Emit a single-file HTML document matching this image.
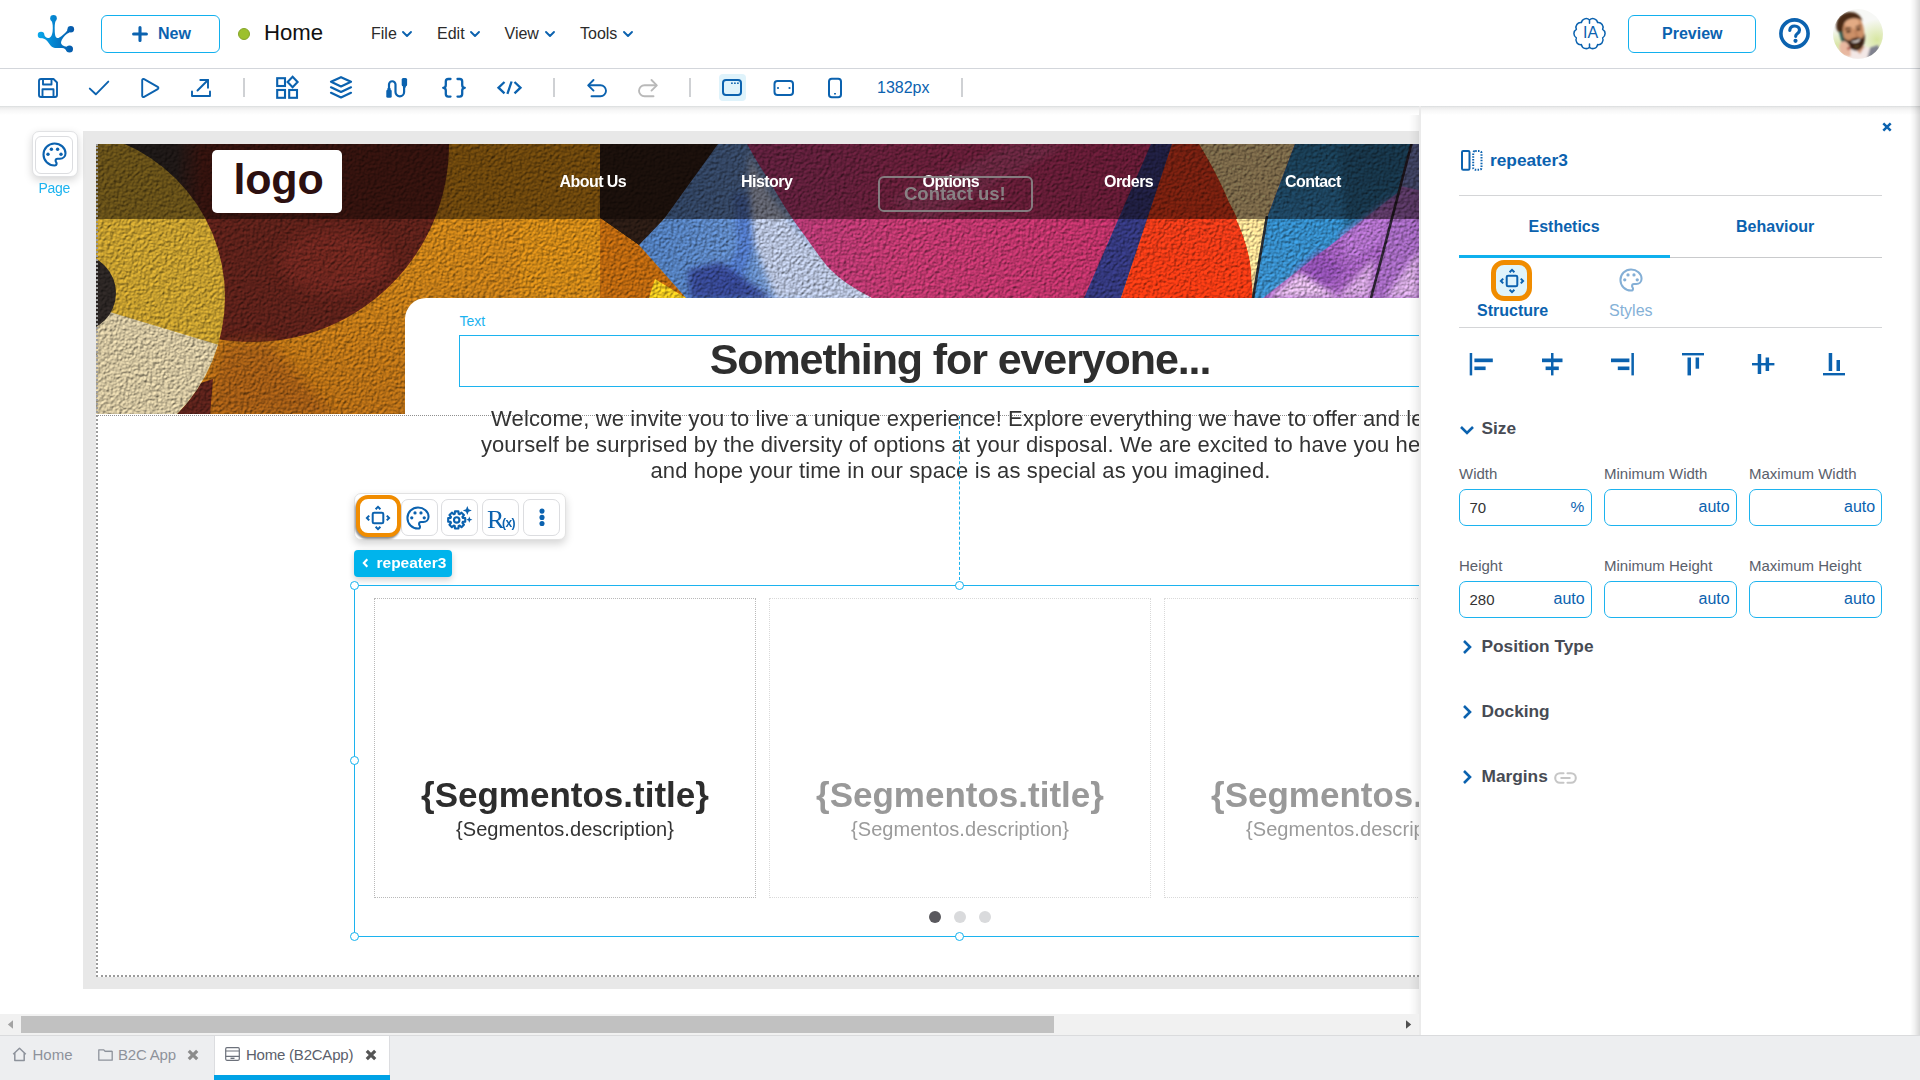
<!DOCTYPE html>
<html lang="en">
<head>
<meta charset="utf-8">
<title>Home - Page modeler</title>
<style>
*{box-sizing:border-box;margin:0;padding:0}
html,body{width:1920px;height:1080px;overflow:hidden;background:#fff}
body{font-family:"Liberation Sans",sans-serif;color:#333;position:relative}
.abs{position:absolute}
svg{position:absolute;overflow:visible}
.ic{fill:none;stroke:#0b62af;stroke-width:1.9;stroke-linecap:round;stroke-linejoin:round}
.icf{fill:#0b62af;stroke:none}
.t{position:absolute;white-space:nowrap;line-height:1}
/* ---------- top bar ---------- */
#topbar{left:0;top:0;width:1920px;height:69px;background:#fff;border-bottom:1px solid #d3d6db}
.btn{position:absolute;border:1px solid #12b0ee;border-radius:6px;background:#fff;color:#0b62af;font-weight:700;font-size:16px}
.menu{font-size:16px;color:#2b2b2b;top:26px}
/* ---------- toolbar ---------- */
#toolbar{left:0;top:69px;width:1920px;height:37px;background:#fff}
#tbshadow{left:0;top:106px;width:1920px;height:9px;background:linear-gradient(#d9dcdd 0,#ececec 18%,#f7f7f7 50%,#fff 100%)}
.sep{position:absolute;top:78px;width:2px;height:19px;background:#cfd1d4}
/* ---------- canvas ---------- */
#canvasbg{left:83px;top:131px;width:1336px;height:858px;background:#e8e8e8}
#page{left:96px;top:144px;width:1323px;height:833px;background:#fff}

.nav{top:173.500px;font-size:16px;font-weight:700;color:#fff;letter-spacing:-.55px}
.ctr{left:405px;width:1110px;text-align:center}
.fbtn{position:absolute;top:498.500px;width:37px;height:37.500px;border:1px solid #dcdde0;border-radius:7px;background:#fff}
.card{position:absolute;top:598px;width:382px;height:300px;border:1px dotted #d9d9d9}
.ctitle{top:776.500px;width:382px;text-align:center;font-size:35px;font-weight:700}
.cdesc{top:819px;width:382px;text-align:center;font-size:20px;letter-spacing:.05px}
.dot{position:absolute;top:911px;width:12px;height:12px;border-radius:50%;background:#d9dadc}
.hd{position:absolute;width:9.500px;height:9.500px;border-radius:50%;background:#fff;border:1.500px solid #12b1ee;margin:-.25px 0 0 -.25px}
/* ---------- panel ---------- */
#panel{left:1419px;top:106px;width:501px;height:930px;background:#fff;border-left:2px solid #ebebeb}
.plabel{font-size:15px;color:#5a606b}
.inp{position:absolute;width:132.500px;height:37px;border:1px solid #1cb3ef;border-radius:7px;background:#fff}
.sec{font-size:17.300px;font-weight:700;color:#474b54}
.unit{font-size:16px;color:#0b62af}
/* ---------- bottom ---------- */
#hscroll{left:0;top:1014px;width:1419px;height:21px;background:#f1f1f1}
#bottombar{left:0;top:1035px;width:1920px;height:45px;background:#edeef0;border-top:1px solid #dadbdd}
</style>
</head>
<body>


<svg width="0" height="0" style="left:-10px;top:-10px"><defs>
 <g id="palette"><path fill="none" stroke="#0b62af" stroke-width="2.100" stroke-linejoin="round" d="M12.500 1.500C6.400 1.500 1.500 6.400 1.500 12.500s4.900 11 11 11c1.300 0 2.100-.9 2.100-2 0-.6-.2-1-.5-1.400-.3-.4-.5-.8-.5-1.400 0-1.100.9-2 2-2h2.400c3.100 0 5.500-2.400 5.500-5.500 0-5.300-4.900-9.700-11-9.700z"/>
 <g fill="#0b62af"><circle cx="6" cy="12.300" r="1.700"/><circle cx="9.400" cy="7.200" r="1.700"/><circle cx="15.600" cy="7.200" r="1.700"/><circle cx="19" cy="12.300" r="1.700"/></g></g>
 <g id="move"><rect x="6.700" y="6.700" width="10.600" height="10.600" rx="1.400" fill="none" stroke="#0b62af" stroke-width="2"/>
 <g fill="none" stroke="#0b62af" stroke-width="2"><path d="M9.600 3.200L12 .900l2.400 2.300"/><path d="M9.600 20.800l2.400 2.300 2.400-2.300"/><path d="M3.200 9.600L.900 12l2.300 2.400"/><path d="M20.800 9.600l2.300 2.400-2.300 2.400"/></g></g>
</defs></svg>
<!-- ================= TOP BAR ================= -->
<div id="topbar" class="abs"></div>

<!-- app logo -->
<svg style="left:30px;top:8px" width="60" height="54" viewBox="0 0 1200 1080">
  <defs><linearGradient id="lg" x1="150" y1="0" x2="880" y2="0" gradientUnits="userSpaceOnUse">
    <stop offset="0" stop-color="#0aa9ec"/><stop offset=".45" stop-color="#0584cf"/><stop offset="1" stop-color="#0657a8"/></linearGradient></defs>
  <g fill="url(#lg)">
    <circle cx="470" cy="207" r="66"/><circle cx="221" cy="540" r="66"/><circle cx="816" cy="426" r="66"/><circle cx="790" cy="822" r="70"/>
    <path d="M430 255 C455 300 462 380 452 470 C440 560 405 610 355 600 C310 590 290 560 275 520 L235 600 C300 610 340 650 385 715 C420 765 450 795 500 798 L640 800 C690 805 715 830 735 860 L800 760 C740 785 690 775 650 745 C610 715 615 680 640 630 C670 570 720 520 790 488 L760 415 C740 470 700 505 650 545 C600 585 565 610 540 600 C505 585 495 520 495 440 C492 370 495 300 512 258 Z"/>
  </g>
</svg>

<!-- New button -->
<div class="btn" style="left:101px;top:15px;width:119px;height:38px"></div>
<svg style="left:132px;top:26px" width="16" height="16" viewBox="0 0 16 16"><path d="M8 1.6v12.8M1.6 8h12.8" stroke="#0b62af" stroke-width="3.1" stroke-linecap="round" fill="none"/></svg>
<div class="t" style="left:158px;top:26px;font-size:16px;font-weight:700;color:#0b62af">New</div>

<!-- status dot + title -->
<div class="abs" style="left:238px;top:28px;width:12px;height:12px;border-radius:50%;background:#9cc02d;border:1px solid #86a52a"></div>
<div class="t" style="left:264px;top:22px;font-size:22.200px;color:#111">Home</div>

<!-- menus -->
<div class="t menu" style="left:371px">File</div>
<div class="t menu" style="left:437px">Edit</div>
<div class="t menu" style="left:504.5px">View</div>
<div class="t menu" style="left:580px">Tools</div>
<svg style="left:0;top:0" width="700" height="68">
  <g class="ic" stroke-width="2">
    <path d="M403 32l4 4 4-4"/><path d="M471 32l4 4 4-4"/><path d="M546 32l4 4 4-4"/><path d="M624 32l4 4 4-4"/>
  </g>
</svg>

<!-- right side of top bar -->
<svg style="left:1573px;top:17px" width="33" height="33" viewBox="0 0 33 33">
  <path class="ic" style="stroke-width:1.5" d="M16.50 3.01 A4.8 4.8 0 0 1 24.61 5.60 A4.8 4.8 0 0 1 29.62 12.40 A4.8 4.8 0 0 1 29.62 20.80 A4.8 4.8 0 0 1 24.61 27.60 A4.8 4.8 0 0 1 16.50 30.19 A4.8 4.8 0 0 1 8.39 27.60 A4.8 4.8 0 0 1 3.38 20.80 A4.8 4.8 0 0 1 3.38 12.40 A4.8 4.8 0 0 1 8.39 5.60 A4.8 4.8 0 0 1 16.50 3.01Z M16.50 3.01 v3.2 M16.50 30.19 v-3.2"/>
</svg>
<div class="t" style="left:1583px;top:25px;font-size:16px;color:#0b62af">IA</div>

<div class="btn" style="left:1628px;top:15px;width:128px;height:38px"></div>
<div class="t" style="left:1662px;top:26px;font-size:16px;font-weight:700;color:#0b62af">Preview</div>

<svg style="left:1779px;top:18px" width="31" height="31" viewBox="0 0 31 31">
  <circle cx="15.500" cy="15.500" r="13.600" fill="none" stroke="#0b62af" stroke-width="3.600"/>
  <path d="M10.800 12.300c.2-2.700 2.200-4.300 4.900-4.300 2.800 0 4.800 1.700 4.800 4.100 0 1.800-1 2.800-2.300 3.700-1.100.8-1.500 1.300-1.500 2.500" fill="none" stroke="#0b62af" stroke-width="3.200" stroke-linecap="round"/>
  <circle cx="16.500" cy="22.800" r="2.100" fill="#0b62af"/>
</svg>

<!-- avatar -->
<svg style="left:1833px;top:9px" width="50" height="50" viewBox="0 0 50 50">
  <defs><clipPath id="avc"><circle cx="25" cy="25" r="25"/></clipPath>
  <filter id="avb" x="-10%" y="-10%" width="120%" height="120%"><feGaussianBlur stdDeviation=".85"/></filter>
  <radialGradient id="avg1" cx=".88" cy=".62" r=".42"><stop offset="0" stop-color="#d7e6a0"/><stop offset="1" stop-color="#d7e6a0" stop-opacity="0"/></radialGradient>
  <radialGradient id="avg2" cx=".08" cy=".72" r=".32"><stop offset="0" stop-color="#d9e6a6"/><stop offset="1" stop-color="#d9e6a6" stop-opacity="0"/></radialGradient></defs>
  <g clip-path="url(#avc)">
    <rect width="50" height="50" fill="#f7f8f6"/>
    <rect width="50" height="50" fill="url(#avg1)"/><rect width="50" height="50" fill="url(#avg2)"/>
    <g filter="url(#avb)">
      <path d="M36 39 L45 36 L50 50 H31Z" fill="#80828f"/>
      <path d="M17 41 L29 37 L37 39 L34 50 H18Z" fill="#f3e8e6"/>
      <path d="M20 38 l7 7 5-8z" fill="#d39b7c"/>
      <!-- face (tilted) -->
      <g transform="rotate(-9 20 24)">
        <path d="M9 15 C10 8 19 5 26 8 C31 11 32 20 31 27 C30 35 26 41 21 41 C15 41 10 34 9 26Z" fill="#cc9068"/>
        <path d="M12 13 C16 8.500 23 8 27 11 C28 15 27 18 25 20 C20 20 15 18 12 13Z" fill="#e3ab84"/>
        <path d="M21 22 c1 3 1.500 5 .5 7 l3 .3 c.8-2 .3-4.500-1-7.300z" fill="#b87b55" opacity=".7"/>
        <ellipse cx="15.800" cy="21.800" rx="2.600" ry="1.300" fill="#4b2e1e"/><ellipse cx="26" cy="21.200" rx="2.400" ry="1.200" fill="#4b2e1e"/>
        <path d="M12.500 19.500 c2-1.400 4.500-1.600 6.500-.7M23.500 18.800 c1.800-1.200 4-1.200 5.500-.2" stroke="#4a2c18" stroke-width="1.300" fill="none"/>
        <!-- beard -->
        <path d="M9.500 26 C10.500 35 15.500 42 21 42 C27 42 31 35.500 31.500 26 C30 29 28.500 30.500 27 30.500 C25 28.500 18 28.500 15.500 31 C13 30.500 11 29 9.500 26Z" fill="#3b2416"/>
        <path d="M16.500 31.500 c3 1.200 7 .8 9.800-1.200 c-.8 3.800-7.200 5-9.800 1.200z" fill="#f5ede8"/>
        <path d="M19 36.500 c1.500.8 3.500.8 5 0 l-.5 2 c-1.300.5-2.700.5-4 0z" fill="#6a5a2c" opacity=".7"/>
      </g>
      <!-- hair -->
      <path d="M3.500 20 C2 10 8 3.500 16 3 C23 2.500 27.500 6 29.500 12 C25 8.500 19.500 8.500 14.500 11 C10.500 13.500 9.500 18.500 10 24 C7 24 4.500 23 3.500 20Z" fill="#4a2c18"/>
      <!-- phone + hand -->
      <path d="M6 23 l3.500-1 2.200 10.500-3 1z" fill="#2f5a50"/>
      <path d="M6.500 36 C8 32 12 31 14.500 34 C17 37 18.500 42 17.500 48 L8 46 C6.500 43 6 39 6.500 36Z" fill="#e8b8a0"/>
      <circle cx="15.500" cy="39.500" r="1.500" fill="#a8483f"/>
    </g>
  </g>
</svg>

<!-- ================= TOOLBAR ================= -->
<div id="toolbar" class="abs"></div>
<div id="tbshadow" class="abs"></div>
<div class="sep" style="left:243px"></div>
<div class="sep" style="left:553px"></div>
<div class="sep" style="left:689px"></div>
<div class="sep" style="left:961px"></div>
<div class="abs" style="left:719px;top:74px;width:27px;height:27px;border-radius:4px;background:#dff3fb"></div>
<div class="t" style="left:877px;top:80px;font-size:16px;color:#0b62af">1382px</div>

<svg id="tbicons" style="left:0;top:0" width="1000" height="110">
 <g class="ic">
  <!-- save -->
  <path d="M39 81a2 2 0 0 1 2-2h12.500l3.500 3.500V95a2 2 0 0 1-2 2H41a2 2 0 0 1-2-2z"/>
  <path d="M43 79.200v5.300h8.500v-5.300"/><path d="M42.500 97v-7.800h11V97"/>
  <!-- check -->
  <path d="M89.800 88.600l6 5.700 12.500-12.700"/>
  <!-- play -->
  <path d="M142.200 80.300c0-1 1-1.600 1.900-1.100l13.600 7.700c.9.500.9 1.700 0 2.200l-13.600 7.700c-.9.500-1.900-.1-1.900-1.100z"/>
  <!-- export -->
  <path d="M192 91.500V96h18v-4.500"/><path d="M197.500 90.500L208 80"/><path d="M200.300 80h7.700v7.700"/>
  <!-- widgets -->
  <g stroke-linejoin="miter" stroke-linecap="butt" stroke-width="2.100">
   <rect x="277.200" y="78.200" width="7.800" height="7.800"/><rect x="277.200" y="90" width="7.800" height="7.800"/><rect x="289.200" y="90" width="7.800" height="7.800"/>
   <path d="M292.600 76.800l5 5.200-5 5.200-5-5.200z"/>
  </g>
  <!-- layers -->
  <g stroke-width="2.200">
   <path d="M341 77.200l10 4.600-10 4.600-10-4.600z"/><path d="M331 87.300l10 4.700 10-4.700"/><path d="M331 92.800l10 4.700 10-4.700"/>
  </g>
  <!-- flow -->
  <path stroke-width="2.200" d="M389 90V84.500a3.200 3.200 0 0 1 6.500 0V92a4.300 4.300 0 0 0 8.600 0V86"/>
  <!-- braces -->
  <g stroke-width="2.300">
   <path d="M450.500 79h-2.200a2.500 2.500 0 0 0-2.500 2.500v3.600c0 1.600-1 2.700-2.600 2.700 1.600 0 2.600 1.100 2.600 2.700v3.600a2.500 2.500 0 0 0 2.500 2.500h2.200"/>
   <path d="M457.500 79h2.200a2.500 2.500 0 0 1 2.500 2.500v3.600c0 1.600 1 2.700 2.600 2.700-1.600 0-2.600 1.100-2.600 2.700v3.600a2.500 2.500 0 0 1-2.500 2.500h-2.200"/>
  </g>
  <!-- code -->
  <g stroke-width="2.300" stroke-linecap="butt" stroke-linejoin="miter">
   <path d="M504.500 82l-6 5.700 6 5.700"/><path d="M514.500 82l6 5.700-6 5.700"/><path d="M511.600 81.500l-4.200 12.300"/>
  </g>
  <!-- undo -->
  <path d="M593.500 80l-5.300 5.300 5.300 5.300"/><path d="M588.800 85.300h11.700a5.500 5.500 0 0 1 0 11h-9"/>
  <!-- device icons -->
  <g stroke-width="2">
   <rect x="723" y="80" width="18" height="15" rx="3"/>
   <rect x="774.500" y="81" width="18.500" height="14" rx="3"/>
   <rect x="829" y="78.800" width="12" height="18.400" rx="2.800"/>
  </g>
 </g>
 <!-- redo (disabled) -->
 <g class="ic" style="stroke:#b9b9b9"><path d="M651.500 80l5.300 5.300-5.300 5.300"/><path d="M656.200 85.300h-11.700a5.500 5.500 0 0 0 0 11h9"/></g>
 <!-- filled bits -->
 <g class="icf">
  <rect x="386.300" y="89.500" width="5.400" height="8.300" rx="1.500"/><rect x="387.500" y="88" width="3" height="3"/>
  <rect x="401.700" y="78" width="5.400" height="8.300" rx="1.500"/><rect x="402.900" y="85" width="3" height="2.500"/>
  <rect x="731" y="82.500" width="1.800" height="1.400"/><rect x="734" y="82.500" width="1.800" height="1.400"/><rect x="737" y="82.500" width="1.800" height="1.400"/>
  <circle cx="778" cy="88" r="1.100"/><circle cx="789.500" cy="88" r="1.100"/>
  <rect x="834" y="93" width="2" height="1.500" rx=".5"/>
 </g>
</svg>

<!-- ================= CANVAS ================= -->
<div id="canvasbg" class="abs"></div>
<div id="page" class="abs"></div>

<!-- hero mural -->
<svg style="left:96px;top:144px" width="1323" height="270" viewBox="96 144 1323 270">
 <defs>
  <clipPath id="hc"><rect x="96" y="144" width="1323" height="270"/></clipPath>
  <clipPath id="ycirc"><circle cx="58" cy="297" r="167"/></clipPath>
  <filter id="stucco" x="0" y="0" width="100%" height="100%" color-interpolation-filters="sRGB">
    <feTurbulence type="fractalNoise" baseFrequency="0.33" numOctaves="3" seed="4" result="n"/>
    <feDiffuseLighting in="n" surfaceScale="1.15" diffuseConstant="1" lighting-color="#fff" result="lt"><feDistantLight azimuth="235" elevation="52"/></feDiffuseLighting>
    <feComposite in="SourceGraphic" in2="lt" operator="arithmetic" k1="1.27" k2="0" k3="0" k4="0"/>
  </filter>
  <filter id="soft" x="-30%" y="-30%" width="160%" height="160%"><feGaussianBlur stdDeviation="7"/></filter>
  <filter id="soft3" x="-30%" y="-30%" width="160%" height="160%"><feGaussianBlur stdDeviation="3"/></filter>
  <linearGradient id="charG" x1="150" y1="0" x2="203" y2="0" gradientUnits="userSpaceOnUse"><stop offset="0" stop-color="#2f2c2b"/><stop offset=".5" stop-color="#322a29"/><stop offset="1" stop-color="#5b2019"/></linearGradient>
  <linearGradient id="orG" x1="0" y1="144" x2="0" y2="414" gradientUnits="userSpaceOnUse"><stop offset="0" stop-color="#cb8618"/><stop offset=".45" stop-color="#c47e18"/><stop offset="1" stop-color="#b06a15"/></linearGradient>
  <linearGradient id="redG" x1="0" y1="144" x2="0" y2="300" gradientUnits="userSpaceOnUse"><stop offset="0" stop-color="#d6391f"/><stop offset="1" stop-color="#f23a12"/></linearGradient>
  <linearGradient id="magG" x1="760" y1="0" x2="1120" y2="0" gradientUnits="userSpaceOnUse"><stop offset="0" stop-color="#ae3a74"/><stop offset=".4" stop-color="#bb376c"/><stop offset="1" stop-color="#ba3166"/></linearGradient>
  <linearGradient id="tealG" x1="0" y1="144" x2="0" y2="298" gradientUnits="userSpaceOnUse"><stop offset="0" stop-color="#27729f"/><stop offset=".5" stop-color="#3388c2"/><stop offset="1" stop-color="#3a8cc6"/></linearGradient>
  <linearGradient id="bluG" x1="650" y1="0" x2="870" y2="0" gradientUnits="userSpaceOnUse"><stop offset="0" stop-color="#4f7bb8"/><stop offset=".45" stop-color="#6088c2"/><stop offset=".6" stop-color="#7f9dcd"/><stop offset="1" stop-color="#c6ccdb"/></linearGradient>
 </defs>
 <g clip-path="url(#hc)" filter="url(#stucco)">
  <!-- base orange -->
  <rect x="96" y="144" width="1323" height="270" fill="url(#orG)"/>
  <!-- maroon circle -->
  <circle cx="252" cy="145" r="197" fill="#5b2019"/>
  <ellipse cx="335" cy="262" rx="55" ry="32" fill="#8a2f25" opacity=".38" filter="url(#soft)"/>
  <!-- charcoal sliver top-left -->
  <path d="M100 144H200L206 212H140Z" fill="url(#charG)"/>
  
  <!-- shadowy band below maroon -->
  <path d="M221 344 L268 340 L335 416 L205 416Z" fill="#8e4c18" opacity=".55" filter="url(#soft)"/>
  <path d="M165 416 L198 384 L213 379 L210 416Z" fill="#59211a"/>
  <!-- yellow circle -->
  <circle cx="58" cy="297" r="167" fill="#c19b2e"/>
  <g clip-path="url(#ycirc)">
    <path d="M90 306 L226 347 L226 420 L90 420Z" fill="#cec09c"/>
    <circle cx="77" cy="293" r="39" fill="#2b2523"/>
  </g>
  <!-- middle: lighter orange strip, black wedge, dark orange -->
  <rect x="452" y="144" width="148" height="75" fill="#cd8817"/>
  <path d="M600 144H722L664 219 640 246 600 218Z" fill="#2a1b14"/>
  <path d="M600 218 L640 246 L686 298 H600Z" fill="#b8660f"/>
  <path d="M520 219H600V298H520Z" fill="#cf8a18" opacity=".55"/>
  <!-- blue fan -->
  <path d="M718 144H750 C775 190 800 240 872 298 H686 L639 245 664 219Z" fill="url(#bluG)"/>
  <path d="M749 150 C762 188 795 240 872 299 H776 L753 242 L749 200Z" fill="#b3bed7" filter="url(#soft3)"/>
  <path d="M733 192 L749 196 L753 246 L738 298 H712 L738 246Z" fill="#456ac2" opacity=".6" filter="url(#soft3)"/>
  <path d="M688 270 L720 262 L745 279 L772 299 H690Z" fill="#33408a" opacity=".9" filter="url(#soft3)"/>
  <path d="M649 298 L655 279 L686 298Z" fill="#e5c01f"/>
  <!-- magenta circle -->
  <path d="M747 144 C756 160 762 170 768 178.500 C773 187 778 196 783 204 C790 215 797 226 805 236 C812 246 819 256 827 266 C840 280 855 289 872 298 H1090 L1160 144Z" fill="url(#magG)"/>
  <path d="M890 200 L1010 144 H1070 L925 222Z" fill="#cf74a4" opacity=".3" filter="url(#soft3)"/>
  <!-- navy stripe -->
  <path d="M1151 144H1173L1121 298H1084Z" fill="#33377b"/>
  <!-- red leaf -->
  <path d="M1172 144H1199 C1212 165 1222 185 1229 202 C1236 215 1240 224 1242 232 C1248 250 1251 262 1251 273 L1253 298 H1121Z" fill="url(#redG)"/>
  <!-- cream -->
  <path d="M1199 144H1296L1267 218 1257 288 1253 298 1251 273 C1251 262 1248 250 1242 232 C1240 224 1236 215 1229 202 C1222 185 1212 165 1199 144Z" fill="#e6c88c"/>
  <path d="M1236 219H1267L1256 290 1251 268 C1249 250 1243 234 1236 219Z" fill="#f5db93"/>
  <!-- blue / purple -->
  <path d="M1295 144H1412L1371 298H1253L1267 218Z" fill="#9d5db7"/>
  <path d="M1295 144H1411L1402 189 1263 298H1253L1267 218Z" fill="url(#tealG)"/>
  <path d="M1340 144H1411L1402 189 1345 232Z" fill="#235f86" opacity=".8" filter="url(#soft3)"/>
  <path d="M1321 250l24 20-24 22-26-20z" fill="#8a4cab" opacity=".75" filter="url(#soft3)"/>
  <path d="M1268 298L1300 272 1340 298Z" fill="#d6b0dc" filter="url(#soft3)"/>
  <path d="M1336 298L1374 258 1371 298Z" fill="#d3a9da" opacity=".85" filter="url(#soft3)"/>
  <path d="M1340 236 L1395 196 L1385 240 L1350 262Z" fill="#b476cc" opacity=".7" filter="url(#soft3)"/>
  <path d="M1411 144H1419V298H1371Z" fill="#a067bb"/>
  <path d="M1411 144H1419V190L1400 186Z" fill="#6f7cba"/>
  <path d="M1385 298L1419 250V298Z" fill="#cda4d8" filter="url(#soft3)"/>
  <!-- thin dark lines -->
  <path d="M1411.500 144L1371 298" stroke="#2a2230" stroke-width="2.600"/>
  <path d="M1267 216L1253 298" stroke="#272a30" stroke-width="2.600"/>
 </g>
</svg>
<!-- nav overlay -->
<div class="abs" style="left:96px;top:144px;width:1323px;height:75px;background:rgba(10,4,2,.5)"></div>
<!-- page left dotted border over the hero -->
<div class="abs" style="left:96px;top:144px;width:0;height:833px;border-left:2px dotted #9c9c9c"></div>
<div class="abs" style="left:96px;top:975px;width:1323px;height:0;border-top:2px dotted #9c9c9c"></div>

<!-- logo box -->
<div class="abs" style="left:212px;top:150px;width:130px;height:63px;background:#fff;border-radius:5px"></div>
<div class="t" style="left:233.500px;top:158px;font-size:43px;font-weight:700;color:#2c1010;letter-spacing:-.2px">logo</div>

<!-- nav links -->
<div class="t nav" style="left:559.500px">About Us</div>
<div class="t nav" style="left:741px">History</div>
<div class="t nav" style="left:922.500px">Options</div>
<div class="t nav" style="left:1104px">Orders</div>
<div class="t nav" style="left:1285px">Contact</div>
<div class="abs" style="left:877.500px;top:175.500px;width:155.500px;height:36px;border:2px solid rgba(138,138,138,.88);border-radius:6px"></div>
<div class="t" style="left:904px;top:184.500px;font-size:18.500px;font-weight:700;color:rgba(140,140,140,.9)">Contact us!</div>

<!-- white card -->
<div class="abs" style="left:405px;top:298px;width:1014px;height:130px;background:#fff;border-top-left-radius:21px"></div>
<!-- hero bottom dotted line -->
<div class="abs" style="left:96px;top:415px;width:1323px;height:0;border-top:1px dotted #8f8f8f"></div>

<div class="t" style="left:459.500px;top:314px;font-size:14px;color:#1cb3ef">Text</div>
<div class="abs" style="left:459px;top:335px;width:962px;height:52px;border:1px solid #1cb3ef;border-right:none"></div>
<div class="t ctr" style="top:338px;font-size:43px;font-weight:700;color:#2e2e2e;letter-spacing:-1.1px">Something for everyone...</div>
<div class="abs" id="para" style="left:405.500px;top:405.500px;width:1110px;text-align:center;font-size:22px;line-height:26px;color:#333;letter-spacing:.12px;white-space:nowrap">Welcome, we invite you to live a unique experience! Explore everything we have to offer and let<br>yourself be surprised by the diversity of options at your disposal. We are excited to have you here<br>and hope your time in our space is as special as you imagined.</div>

<!-- distance guide -->
<div class="abs" style="left:959px;top:416px;width:0;height:169px;border-left:1px dashed #1cb3ef"></div>
<!-- Page button (left) -->
<div class="abs" style="left:31.500px;top:131px;width:46px;height:46px;background:#fff;border-radius:7px;border:1px solid #e1e2e4;box-shadow:0 3px 9px rgba(0,0,0,.17)"></div>
<div class="abs" style="left:35px;top:136px;width:38px;height:38px;background:#fff;border-radius:6px;border:1px solid #dcdde0"></div>
<svg style="left:42px;top:142px" width="25" height="25" viewBox="0 0 25 25"><use href="#palette"/></svg>
<div class="t" style="left:38.500px;top:181px;font-size:14px;color:#1cb3ef;letter-spacing:-.3px">Page</div>

<!-- floating toolbar -->
<div class="abs" style="left:354px;top:493px;width:212px;height:47px;background:#fff;border:1px solid #e2e2e2;border-radius:7px;box-shadow:0 4px 9px rgba(0,0,0,.17)"></div>
<div class="fbtn" style="left:400.500px"></div>
<div class="fbtn" style="left:441px"></div>
<div class="fbtn" style="left:482px"></div>
<div class="fbtn" style="left:523px"></div>
<div class="abs" style="left:355.500px;top:495px;width:45.500px;height:42px;border:4.500px solid #f08c00;border-radius:12px;background:#fff;box-shadow:-1px 2px 2px rgba(0,0,0,.45)"></div>
<svg style="left:365.500px;top:505.500px" width="24" height="24" viewBox="0 0 24 24"><use href="#move"/></svg>
<svg style="left:406px;top:505.500px" width="24" height="24" viewBox="0 0 25 25"><use href="#palette"/></svg>
<svg style="left:447px;top:505.500px" width="26" height="25" viewBox="0 0 26 25">
  <path d="M15.79 11.95 L18.23 12.17 L18.23 15.63 L15.79 15.85 L15.39 16.83 L16.95 18.71 L14.51 21.15 L12.63 19.59 L11.65 19.99 L11.43 22.43 L7.97 22.43 L7.75 19.99 L6.77 19.59 L4.89 21.15 L2.45 18.71 L4.01 16.83 L3.61 15.85 L1.17 15.63 L1.17 12.17 L3.61 11.95 L4.01 10.97 L2.45 9.09 L4.89 6.65 L6.77 8.21 L7.75 7.81 L7.97 5.37 L11.43 5.37 L11.65 7.81 L12.63 8.21 L14.51 6.65 L16.95 9.09 L15.39 10.97Z" fill="none" stroke="#0b62af" stroke-width="2.100" stroke-linejoin="round"/>
  <circle cx="9.7" cy="13.9" r="2.700" fill="none" stroke="#0b62af" stroke-width="2.100"/>
  <path fill="#0b62af" d="M20.300 0l1.300 3.200 3.200 1.300-3.200 1.300-1.300 3.200-1.300-3.200-3.200-1.300 3.200-1.300zM22.300 10.600l.9 2.200 2.200.9-2.200.9-.9 2.200-.9-2.200-2.200-.9 2.200-.9z"/>
</svg>
<div class="t" style="left:487px;top:506.500px;font-family:'Liberation Serif',serif;font-size:26px;color:#0b62af">R</div>
<div class="t" style="left:502px;top:517px;font-size:12px;font-weight:700;color:#0b62af;letter-spacing:-.6px">(x)</div>
<svg style="left:538.500px;top:508px" width="6" height="19" viewBox="0 0 6 19"><g fill="#0b62af"><circle cx="3" cy="3.100" r="2.550"/><circle cx="3" cy="9.400" r="2.550"/><circle cx="3" cy="15.500" r="2.550"/></g></svg>

<!-- repeater label -->
<div class="abs" style="left:354px;top:549.500px;width:98px;height:27px;background:#00b4ec;border-radius:4px;box-shadow:0 3px 6px rgba(0,0,0,.18)"></div>
<svg style="left:362px;top:558px" width="7" height="10" viewBox="0 0 7 10"><path d="M5.300 1.200L1.800 5l3.500 3.800" fill="none" stroke="#fff" stroke-width="2.100"/></svg>
<div class="t" style="left:376.500px;top:554.500px;font-size:15.500px;font-weight:700;color:#fff">repeater3</div>

<!-- selection box -->
<div class="abs" style="left:354px;top:585px;width:1212px;height:352px;border:1px solid #1cb3ef"></div>
<!-- cards -->
<div class="card" style="left:374px;border-color:#b9b9b9"></div>
<div class="card" style="left:769px"></div>
<div class="card" style="left:1164px"></div>
<div class="t ctitle" style="left:374px;color:#2d2d2d">{Segmentos.title}</div>
<div class="t cdesc" style="left:374px;color:#333">{Segmentos.description}</div>
<div class="t ctitle" style="left:769px;color:#999">{Segmentos.title}</div>
<div class="t cdesc" style="left:769px;color:#9b9b9b">{Segmentos.description}</div>
<div class="t ctitle" style="left:1164px;color:#999">{Segmentos.title}</div>
<div class="t cdesc" style="left:1164px;color:#9b9b9b">{Segmentos.description}</div>
<!-- pager dots -->
<div class="dot" style="left:929px;background:#5a595e"></div>
<div class="dot" style="left:954px"></div>
<div class="dot" style="left:979px"></div>
<!-- handles -->
<div class="hd" style="left:350px;top:581px"></div>
<div class="hd" style="left:955px;top:581px"></div>
<div class="hd" style="left:350px;top:756px"></div>
<div class="hd" style="left:350px;top:932px"></div>
<div class="hd" style="left:955px;top:932px"></div>


<!-- ================= RIGHT PANEL ================= -->
<div class="abs" style="left:1409px;top:115px;width:10px;height:899px;background:linear-gradient(90deg,rgba(0,0,0,0),rgba(0,0,0,.035) 60%,rgba(0,0,0,.075))"></div>
<div id="panel" class="abs"></div>
<div class="abs" style="left:1421px;top:106px;width:499px;height:9px;background:linear-gradient(#d9dcdd 0,#ececec 18%,#f7f7f7 50%,#fff 100%)"></div>
<!-- close x -->
<svg style="left:1882px;top:121.500px" width="10" height="10" viewBox="0 0 10 10"><path d="M1.300 1.300l7.400 7.400M8.700 1.300L1.300 8.700" stroke="#0b62af" stroke-width="2.500" fill="none"/></svg>
<!-- header -->
<svg style="left:1461px;top:150px" width="22" height="21" viewBox="0 0 22 21">
  <rect x="1" y="1" width="7.500" height="18.800" rx="1.200" fill="none" stroke="#0b62af" stroke-width="2"/>
  <rect x="12.200" y="1" width="8.300" height="18.800" rx="2" fill="none" stroke="#0b62af" stroke-width="2" stroke-dasharray="1.500 1.300"/>
</svg>
<div class="t" style="left:1490px;top:152px;font-size:17.300px;font-weight:700;color:#0b62af">repeater3</div>
<div class="abs" style="left:1459px;top:195px;width:423px;height:1px;background:#d4d5d7"></div>
<!-- tabs -->
<div class="t" style="left:1528.500px;top:219px;font-size:16px;font-weight:700;color:#0b62af">Esthetics</div>
<div class="t" style="left:1736px;top:219px;font-size:16px;font-weight:700;color:#0b62af">Behaviour</div>
<div class="abs" style="left:1459px;top:257px;width:423px;height:1px;background:#c9cacc"></div>
<div class="abs" style="left:1459px;top:255px;width:211px;height:3px;background:#0fb0ee"></div>
<!-- sub tabs -->
<div class="abs" style="left:1490.500px;top:259.500px;width:41px;height:41.500px;border:5px solid #f08c00;border-radius:13px;background:#dff4fb"></div>
<svg style="left:1499.500px;top:268.500px" width="24" height="24" viewBox="0 0 24 24"><use href="#move"/></svg>
<div class="t" style="left:1477px;top:302.500px;font-size:16px;font-weight:700;color:#0b62af">Structure</div>
<svg style="left:1619px;top:267.500px;opacity:.5" width="24" height="24" viewBox="0 0 25 25"><use href="#palette"/></svg>
<div class="t" style="left:1609px;top:302.500px;font-size:16px;color:#85b1d7">Styles</div>
<div class="abs" style="left:1459px;top:327px;width:423px;height:1px;background:#d4d5d7"></div>
<!-- align icons -->
<svg style="left:0;top:0" width="1920" height="400"><g fill="#0b62af">
  <rect x="1469.700" y="353" width="2.500" height="22.400"/><rect x="1474.400" y="358.500" width="18.400" height="3.700"/><rect x="1474.400" y="366.500" width="11.200" height="3.600"/>
  <rect x="1551" y="353" width="2.500" height="22.400"/><rect x="1542" y="358.500" width="20.500" height="3.700"/><rect x="1545.600" y="366.500" width="13.200" height="3.600"/>
  <rect x="1631.400" y="353" width="2.500" height="22.400"/><rect x="1611" y="358.500" width="18.400" height="3.700"/><rect x="1617.800" y="366.500" width="11.600" height="3.600"/>
  <rect x="1682" y="353" width="22" height="2.400"/><rect x="1687.500" y="357.500" width="3.500" height="17.900"/><rect x="1695.600" y="357.500" width="3.500" height="11.200"/>
  <rect x="1752" y="363" width="22.400" height="2.400"/><rect x="1757.700" y="354" width="3.500" height="20"/><rect x="1765.600" y="357.500" width="3.500" height="13.500"/>
  <rect x="1823" y="373" width="22" height="2.400"/><rect x="1828.700" y="353" width="3.500" height="18"/><rect x="1836.500" y="360" width="3.500" height="11"/>
</g></svg>
<!-- Size -->
<svg style="left:1459px;top:424px" width="16" height="12" viewBox="0 0 16 12"><path d="M2 3l6 6 6-6" fill="none" stroke="#0b62af" stroke-width="2.600"/></svg>
<div class="t sec" style="left:1481.500px;top:420px">Size</div>
<div class="t plabel" style="left:1459px;top:466px">Width</div>
<div class="t plabel" style="left:1604px;top:466px">Minimum Width</div>
<div class="t plabel" style="left:1749px;top:466px">Maximum Width</div>
<div class="inp" style="left:1459px;top:489px"></div>
<div class="inp" style="left:1604px;top:489px"></div>
<div class="inp" style="left:1749px;top:489px"></div>
<div class="t" style="left:1469.500px;top:500px;font-size:15px;color:#333">70</div>
<div class="t unit" style="left:1570.500px;top:499px;font-size:15.500px">%</div>
<div class="t unit" style="left:1698.500px;top:499px">auto</div>
<div class="t unit" style="left:1844px;top:499px">auto</div>
<div class="t plabel" style="left:1459px;top:558px">Height</div>
<div class="t plabel" style="left:1604px;top:558px">Minimum Height</div>
<div class="t plabel" style="left:1749px;top:558px">Maximum Height</div>
<div class="inp" style="left:1459px;top:581px"></div>
<div class="inp" style="left:1604px;top:581px"></div>
<div class="inp" style="left:1749px;top:581px"></div>
<div class="t" style="left:1469.500px;top:592px;font-size:15px;color:#333">280</div>
<div class="t unit" style="left:1553.500px;top:591px">auto</div>
<div class="t unit" style="left:1698.500px;top:591px">auto</div>
<div class="t unit" style="left:1844px;top:591px">auto</div>
<!-- collapsed sections -->
<svg style="left:1461px;top:639px" width="12" height="16" viewBox="0 0 12 16"><path d="M3 2l6 6-6 6" fill="none" stroke="#0b62af" stroke-width="2.600"/></svg>
<div class="t sec" style="left:1481.500px;top:638px">Position Type</div>
<svg style="left:1461px;top:704px" width="12" height="16" viewBox="0 0 12 16"><path d="M3 2l6 6-6 6" fill="none" stroke="#0b62af" stroke-width="2.600"/></svg>
<div class="t sec" style="left:1481.500px;top:703px">Docking</div>
<svg style="left:1461px;top:768.500px" width="12" height="16" viewBox="0 0 12 16"><path d="M3 2l6 6-6 6" fill="none" stroke="#0b62af" stroke-width="2.600"/></svg>
<div class="t sec" style="left:1481.500px;top:767.500px">Margins</div>
<svg style="left:1554px;top:771.500px" width="23" height="12" viewBox="0 0 23 12"><g fill="none" stroke="#c6c6c6" stroke-width="2.100" stroke-linecap="round"><path d="M9.500 1.200H6a4.800 4.800 0 0 0 0 9.600h3.500"/><path d="M13.500 1.200H17a4.800 4.800 0 0 1 0 9.600h-3.500"/><path d="M7.300 6h8.400"/></g></svg>


<!-- ================= BOTTOM ================= -->
<div id="hscroll" class="abs"></div>
<div class="abs" style="left:21px;top:1016px;width:1033px;height:17px;background:#c1c1c1"></div>
<svg style="left:0;top:1014px" width="1419" height="21"><path d="M13 6.200v8.600l-5.200-4.300z" fill="#a3a3a3"/><path d="M1406 6.200v8.600l5.200-4.300z" fill="#505050"/></svg>
<div id="bottombar" class="abs"></div>
<!-- tab: Home -->
<svg style="left:12px;top:1046.500px" width="15" height="15" viewBox="0 0 15 15"><path d="M1.200 7.200L7.500 1.300l6.300 5.900M2.800 6v7.500h9.400V6" fill="none" stroke="#8d929b" stroke-width="1.500" stroke-linejoin="round"/></svg>
<div class="t" style="left:32.500px;top:1047px;font-size:15px;color:#8d929b">Home</div>
<!-- tab: B2C App -->
<svg style="left:97.500px;top:1047.500px" width="15" height="13" viewBox="0 0 15 13"><path d="M.8 1.800h5l1.300 1.600h7.100v8.800H.8z" fill="none" stroke="#8d929b" stroke-width="1.300" stroke-linejoin="round"/><path d="M7 3.400h7" stroke="#8d929b" stroke-width="1.300"/></svg>
<div class="t" style="left:118px;top:1047px;font-size:15px;color:#8d929b;letter-spacing:-.2px">B2C App</div>
<svg style="left:187px;top:1049px" width="12" height="12" viewBox="0 0 12 12"><path d="M1.800 1.800l8.400 8.400M10.200 1.800L1.800 10.200" stroke="#8b8b8b" stroke-width="3.200" fill="none"/></svg>
<!-- active tab -->
<div class="abs" style="left:213.500px;top:1036px;width:176px;height:44px;background:#fff;border-left:1px solid #dcdde0;border-right:1px solid #dcdde0"></div>
<div class="abs" style="left:213.500px;top:1075px;width:176px;height:5px;background:#00a2e6"></div>
<svg style="left:225px;top:1047px" width="15" height="14" viewBox="0 0 15 14"><g fill="none" stroke="#6c717b" stroke-width="1.200"><rect x=".7" y=".7" width="13.600" height="12.600" rx="1.200"/><path d="M.7 4h13.600M.7 9.300h13.600"/><path d="M5.500 11.300h4" stroke-width="1.400"/></g></svg>
<div class="t" style="left:246px;top:1047px;font-size:15px;color:#5b606b;letter-spacing:-.22px">Home (B2CApp)</div>
<svg style="left:365px;top:1049px" width="12" height="12" viewBox="0 0 12 12"><path d="M1.800 1.800l8.400 8.400M10.200 1.800L1.800 10.200" stroke="#555" stroke-width="3.200" fill="none"/></svg>
<!-- right edge shadow -->
<div class="abs" style="left:1910px;top:0;width:10px;height:1035px;background:linear-gradient(90deg,rgba(0,0,0,0),rgba(0,0,0,.05) 45%,rgba(0,0,0,.16))"></div>


</body>
</html>
